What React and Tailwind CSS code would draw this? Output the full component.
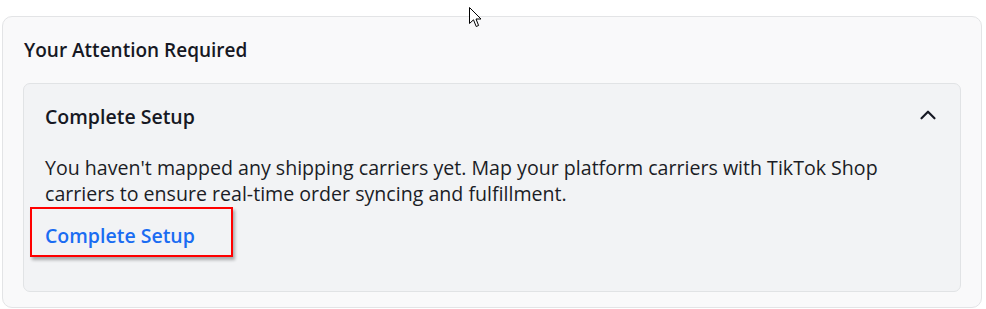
import { ChevronUp } from 'lucide-react'

const Cursor = () => (
  <svg className="absolute left-[469px] top-[7px]" width="13" height="21" viewBox="0 0 13 21">
    <path
      d="M0.5 0.5 L0.5 16.5 L4.5 12.8 L7.2 19.5 L9.6 18.5 L7 12 L12 12 Z"
      fill="#fff"
      stroke="#000"
      strokeWidth="1"
      strokeLinejoin="miter"
    />
  </svg>
)

const App = () => {
  return (
    <div className="relative w-[986px] h-[309px] bg-white font-['Open_Sans',sans-serif] pt-4 pl-[2px] pr-1">
      <Cursor />
      <div className="h-[292px] rounded-[10px] border border-[#e3e4e6] bg-[#f9f9fa] px-5 pt-[21px]">
        <h2 className="text-[19px] font-semibold leading-6 text-[#161823] ml-[1px]">Your Attention Required</h2>
        <div className="mt-[21px] rounded-[7px] border border-[#e1e3e5] bg-[#f2f3f5] px-[21px] pt-[21px] h-[209px]">
          <div className="flex items-center justify-between">
            <h3 className="text-[19.5px] font-semibold leading-6 text-[#161823]">Complete Setup</h3>
            <ChevronUp className="w-[26px] h-[26px] text-[#161823] -mr-[2px] -mt-[5px]" strokeWidth={2} />
          </div>
          <p className="mt-[26px] text-[19.6px] leading-[26px] text-[#1b1d26] whitespace-nowrap">
            You haven't mapped any shipping carriers yet. Map your platform carriers with TikTok Shop
            <br />
            carriers to ensure real-time order syncing and fulfillment.
          </p>
          <div className="relative mt-[17px] inline-block">
            <a href="#" className="text-[19.5px] font-semibold leading-6 text-[#1a6cf2]">Complete Setup</a>
            <span className="absolute -left-[15px] -top-[17px] w-[203px] h-[50px] border-2 border-[#ff0000] shadow-[2px_3px_3px_rgba(0,0,0,0.3)]" />
          </div>
        </div>
      </div>
    </div>
  )
}

export default App
